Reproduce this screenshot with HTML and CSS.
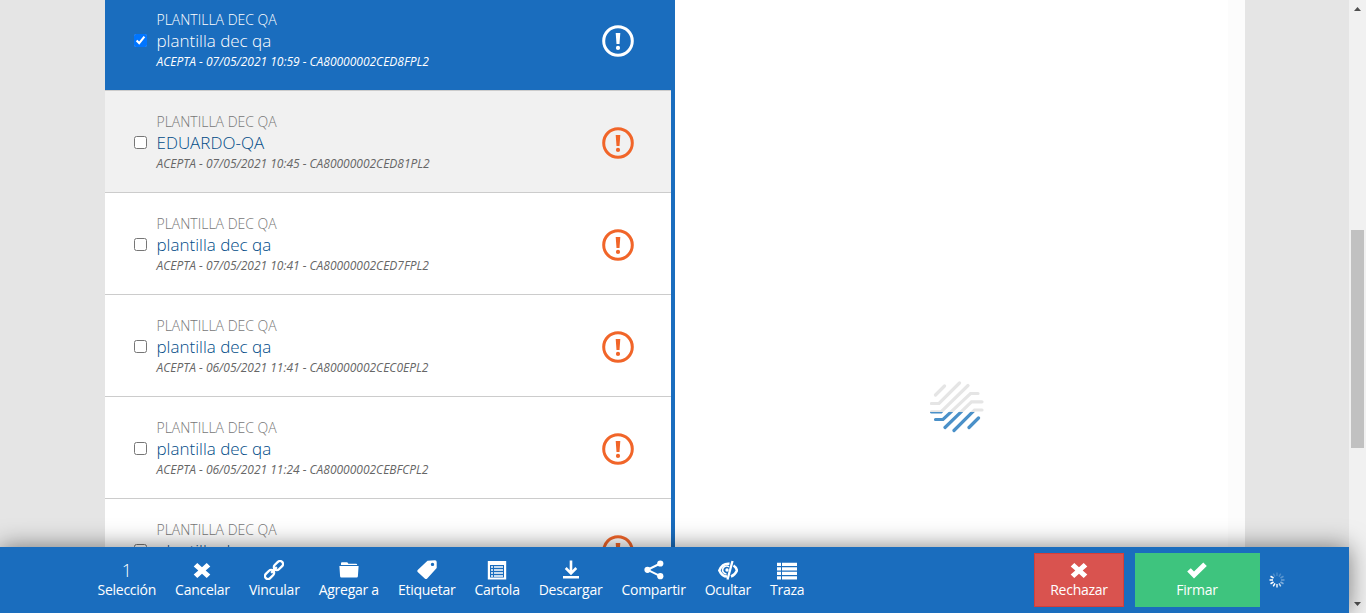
FILE: index.html
```html
<!DOCTYPE html>
<html lang="es">
<head>
<meta charset="utf-8">
<title>Documentos</title>
<link rel="stylesheet" href="styles.css">
</head>
<body>
<svg class="defs" aria-hidden="true">
  <symbol id="alert" viewBox="0 0 32 32"><circle cx="16" cy="16" r="14.3" fill="none" stroke="currentColor" stroke-width="3"/><path d="M13.700 8h4.600l-.8 11h-3zM16 20.800a2.100 2.100 0 1 1 0 4.200a2.100 2.100 0 1 1 0-4.200z" fill="currentColor"/></symbol>
  <symbol id="cross" viewBox="0 0 18 16"><path d="M4.300 .5L9 4.700L13.700 .5L17.300 3.900L12.700 8L17.300 12.100L13.700 15.500L9 11.300L4.300 15.500L.7 12.100L5.300 8L.7 3.900z" fill="currentColor"/></symbol>
</svg>
<div class="screen">
  <div class="page">
    <main class="panel">
      <section class="list">
        <article class="row selected"><input type="checkbox" checked><div class="info"><div class="kind">PLANTILLA DEC QA</div><div class="name">plantilla dec qa</div><div class="meta">ACEPTA - 07/05/2021 10:59 - CA80000002CED8FPL2</div></div><svg class="alert"><use href="#alert"/></svg></article>
        <article class="row hover"><input type="checkbox"><div class="info"><div class="kind">PLANTILLA DEC QA</div><div class="name">EDUARDO-QA</div><div class="meta">ACEPTA - 07/05/2021 10:45 - CA80000002CED81PL2</div></div><svg class="alert"><use href="#alert"/></svg></article>
        <article class="row"><input type="checkbox"><div class="info"><div class="kind">PLANTILLA DEC QA</div><div class="name">plantilla dec qa</div><div class="meta">ACEPTA - 07/05/2021 10:41 - CA80000002CED7FPL2</div></div><svg class="alert"><use href="#alert"/></svg></article>
        <article class="row"><input type="checkbox"><div class="info"><div class="kind">PLANTILLA DEC QA</div><div class="name">plantilla dec qa</div><div class="meta">ACEPTA - 06/05/2021 11:41 - CA80000002CEC0EPL2</div></div><svg class="alert"><use href="#alert"/></svg></article>
        <article class="row"><input type="checkbox"><div class="info"><div class="kind">PLANTILLA DEC QA</div><div class="name">plantilla dec qa</div><div class="meta">ACEPTA - 06/05/2021 11:24 - CA80000002CEBFCPL2</div></div><svg class="alert"><use href="#alert"/></svg></article>
        <article class="row"><input type="checkbox"><div class="info"><div class="kind">PLANTILLA DEC QA</div><div class="name">plantilla dec qa</div></div><svg class="alert"><use href="#alert"/></svg></article>
      </section>
      <section class="viewer">
        <svg class="loader" viewBox="0 0 54 54" fill="none" stroke-width="3.200" stroke-linecap="round">
          <defs>
            <clipPath id="top"><rect width="54" height="32"/></clipPath>
            <clipPath id="bottom"><rect y="32" width="54" height="22"/></clipPath>
            <g id="strokes"><path d="M5.500 15L14.500 6M1.500 23.500H9L29.500 3M1.500 31.900H11L38 5.500M5.500 39.500H13L40.500 13.500H48M15 47.500L41.500 21.800H52M24 50.500L44.500 30H52M39 47.500L48.500 38"/></g>
          </defs>
          <use href="#strokes" stroke="#e5e5e5" clip-path="url(#top)"/>
          <use href="#strokes" stroke="#4a90c8" clip-path="url(#bottom)"/>
        </svg>
      </section>
      <div class="gutter"></div>
    </main>
    <footer class="bar">
      <nav class="tools">
        <div class="tool"><span class="count">1</span><span>Selección</span></div>
        <div class="tool"><svg class="icon"  viewBox="0 0 20 20"><use href="#cross" x="1" y="2.500" width="18" height="16"/></svg><span>Cancelar</span></div>
        <div class="tool"><svg class="icon" viewBox="0 0 20 20"><g transform="rotate(-45 10 10)" fill="none" stroke="#fff" stroke-width="2.300"><rect x="-1.500" y="7" width="10.500" height="6" rx="3"/><rect x="11" y="7" width="10.500" height="6" rx="3"/><path d="M6 10h8"/></g></svg><span>Vincular</span></div>
        <div class="tool"><svg class="icon" viewBox="0 0 20 20"><path d="M2 5V3.200Q2 2.200 3 2.200h5q1 0 1.300 1.500H17q1.200 0 1.200 1.300zM.4 6h19.200l-.7 10.300q-.1 1.200-1.200 1.200H2.300q-1.100 0-1.200-1.200z" fill="#fff"/></svg><span>Agregar a</span></div>
        <div class="tool"><svg class="icon" viewBox="0 0 20 20"><path fill="#fff" fill-rule="evenodd" d="M10.500 .7L18 .2Q19.700.2 19.700 2V8L10 18.700Q9 19.500 8 18.700L.7 12Q-.1 11 .7 10zM15.500 2.700a1.700 1.700 0 1 0 0 3.400a1.700 1.700 0 1 0 0-3.400z"/></svg><span>Etiquetar</span></div>
        <div class="tool"><svg class="icon" viewBox="0 0 20 20"><path d="M.8 1h18.400v18.500H.8z" fill="#fff"/><path d="M3 5h14v12.500H3z" fill="#1a6dbe"/><path d="M4 7h2m1 0h9M4 10h2m1 0h9M4 13h2m1 0h9M4 16h2m1 0h9" stroke="#fff" stroke-width="1.500"/></svg><span>Cartola</span></div>
        <div class="tool"><svg class="icon" viewBox="0 0 20 20"><path d="M10 .5V12M4.700 8L10 13.300L15.300 8" fill="none" stroke="#fff" stroke-width="2.600"/><path d="M2 16h16v2.500H2z" fill="#fff"/></svg><span>Descargar</span></div>
        <div class="tool"><svg class="icon" viewBox="0 0 20 20"><g fill="#fff"><circle cx="3.500" cy="9.800" r="3.100"/><circle cx="16.300" cy="3.500" r="3.100"/><circle cx="16.300" cy="16.200" r="3.100"/></g><path d="M16.300 3.500L3.500 9.800L16.300 16.200" fill="none" stroke="#fff" stroke-width="2"/></svg><span>Compartir</span></div>
        <div class="tool"><svg class="icon" viewBox="0 0 20 20"><g fill="none" stroke="#fff" stroke-width="2.500"><path d="M11.500 3.800Q4.500 3 1.300 10.400Q4 16.500 9 16.500M15.500 5.500Q18 7 19 10.400Q17 15 13 16.500"/><path d="M11 6.800A4 4 0 1 0 8.500 14" stroke-width="1.600"/><path d="M14.500 1L9.500 19.500" stroke-width="2.300"/></g><circle cx="9" cy="10" r="1.700" fill="#fff"/></svg><span>Ocultar</span></div>
        <div class="tool"><svg class="icon" viewBox="0 0 20 20"><path d="M0 4.300h4m1 0h15M0 8.800h4m1 0h15M0 13.300h4m1 0h15M0 17.800h4m1 0h15" stroke="#fff" stroke-width="3.200"/></svg><span>Traza</span></div>
      </nav>
      <div class="actions">
        <div class="btn reject"><svg class="icon" viewBox="0 0 20 20"><use href="#cross" x="1" y="2.500" width="18" height="16"/></svg><span>Rechazar</span></div>
        <div class="btn sign"><svg class="icon" viewBox="0 0 20 20"><path d="M.2 11.500L3.800 8.200L7 11.400L16.300 2.500L19.800 6L7 18.500z" fill="#fff"/></svg><span>Firmar</span></div>
        <svg class="spinner" viewBox="-8 -8 16 16" stroke="#fff" stroke-width="1.500">
          <path d="M0-4V-7.500" opacity=".18"/><path d="M0-4V-7.500" transform="rotate(30)" opacity=".22"/><path d="M0-4V-7.500" transform="rotate(60)" opacity=".28"/><path d="M0-4V-7.500" transform="rotate(90)" opacity=".35"/><path d="M0-4V-7.500" transform="rotate(120)" opacity=".45"/><path d="M0-4V-7.500" transform="rotate(150)" opacity=".75"/><path d="M0-4V-7.500" transform="rotate(180)" opacity=".9"/><path d="M0-4V-7.500" transform="rotate(210)"/><path d="M0-4V-7.500" transform="rotate(240)"/><path d="M0-4V-7.500" transform="rotate(270)"/><path d="M0-4V-7.500" transform="rotate(300)"/><path d="M0-4V-7.500" transform="rotate(330)" opacity=".2"/>
        </svg>
      </div>
    </footer>
  </div>
  <aside class="scrollbar">
    <svg width="7" height="4" viewBox="0 0 7 4"><path d="M0 4L3.500 0L7 4z" fill="#505050"/></svg>
    <div class="thumb"></div>
    <svg class="down" width="7" height="4" viewBox="0 0 7 4"><path d="M0 0L3.500 4L7 0z" fill="#505050"/></svg>
  </aside>
</div>
</body>
</html>
```
FILE: styles.css
```css
* { box-sizing: border-box; }
body { margin: 0; overflow: hidden; font-family: "Open Sans", sans-serif; }
.defs { display: none; }
.screen { display: flex; width: 1366px; height: 613px; overflow: hidden; }
.page { display: flex; flex-direction: column; width: 1349px; background: #e5e5e5; }
.panel { display: flex; width: 1140px; height: 547px; margin-left: 105px; overflow: hidden; }
.list { width: 570px; height: 660px; flex: none; margin-top: -11px; border-right: 4px solid #1a6dbe; background: #fff; }
.row { display: flex; align-items: flex-start; height: 102px; padding: 20px 37px 0 29px; border-bottom: 1px solid #ccc; color: #f16529; }
.row input { width: 13px; height: 13px; margin: 25px 9.500px 0 0; flex: none; }
.info { flex: 1; white-space: nowrap; }
.kind { padding-top: 1px; font-size: 14px; line-height: 19px; font-weight: 300; color: #777; }
.name { font-size: 17px; line-height: 24px; font-weight: 300; color: #004b87; }
.meta { font-size: 12px; line-height: 17px; font-style: italic; color: #666; letter-spacing: -.01px; }
.alert { width: 32px; height: 32px; margin-top: 16px; flex: none; }
.hover { background: #f1f1f1; }
.selected { background: #1a6dbe; color: #fff; }
.selected .kind, .selected .name, .selected .meta { color: #fff; }
.selected .meta { font-weight: 500; }
.viewer { flex: 1; padding: 380px 0 0 255px; background: #fff; }
.loader { display: block; width: 54px; height: 54px; }
.gutter { width: 17px; background: #fcfcfc; }
.bar { position: relative; display: flex; justify-content: space-between; height: 66px; padding: 6px 64px 0 97.500px; background: #1a6dbe; box-shadow: 0 0 24px rgba(0,0,0,.5); color: #fff; font-size: 14px; letter-spacing: -.26px; }
.tools { display: flex; gap: 19.050px; padding-top: 7px; }
.tool, .btn { display: flex; flex-direction: column; align-items: center; line-height: 20px; white-space: nowrap; }
.icon { display: block; width: 20px; height: 20px; }
.count { height: 20px; font-size: 18px; line-height: 21px; font-weight: 300; }
.actions { display: flex; }
.btn { height: 54px; }
.reject { width: 90px; margin-right: 11px; border: 1px solid #d43f3a; padding-top: 6px; background: #d9534f; }
.sign { width: 125px; margin-right: 9px; padding: 7px 1px 0 0; background: #3ec47e; }
.spinner { width: 16px; height: 16px; margin-top: 19px; }
.scrollbar { display: flex; flex-direction: column; align-items: center; width: 17px; height: 613px; padding: 7px 0; background: #f1f1f1; }
.thumb { width: 13px; height: 218px; margin-top: 219px; background: #c1c1c1; }
.down { margin-top: auto; }
```
